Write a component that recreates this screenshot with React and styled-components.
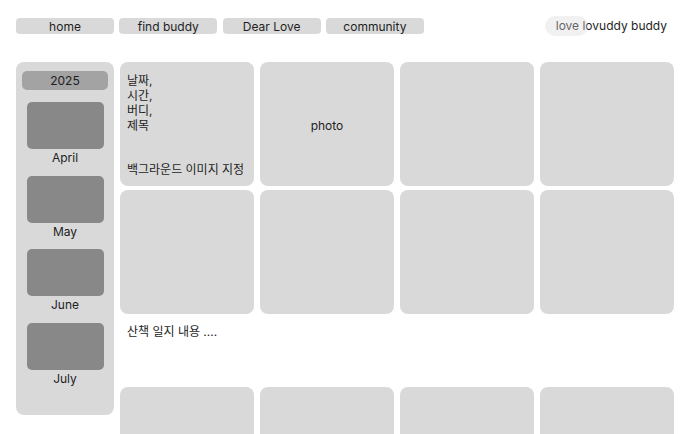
import React from "react";
import styled, { createGlobalStyle } from "styled-components";

const GlobalStyle = createGlobalStyle`
  html, body {
    margin: 0;
    padding: 0;
    background: #ffffff;
    overflow: hidden;
  }
  body {
    font-family: Inter, "Noto Sans CJK KR", sans-serif;
    color: #1e1e1e;
  }
`;

const Page = styled.div`
  width: 685px;
  height: 434px;
  overflow: hidden;
`;

const Header = styled.div`
  display: flex;
  flex-direction: row;
  justify-content: space-between;
  align-items: center;
  padding: 18px 18px 0 16px;
  height: 16px;
`;

const NavList = styled.div`
  display: flex;
  flex-direction: row;
  gap: 5.3px;
`;

const NavItem = styled.a`
  display: flex;
  align-items: center;
  justify-content: center;
  width: 98px;
  height: 16px;
  border-radius: 4px;
  background: #d9d9d9;
  text-decoration: none;
  color: #1e1e1e;
  font-size: 12px;
  line-height: 16px;
  padding-top: 1px;
  box-sizing: border-box;
`;

const Brand = styled.div`
  position: relative;
  font-size: 12px;
  line-height: 16px;
  color: #1e1e1e;
`;

const BrandPill = styled.span`
  position: absolute;
  left: -11px;
  top: -2px;
  width: 43px;
  height: 20px;
  border-radius: 10px;
  background: rgba(217, 217, 217, 0.36);
`;

const Main = styled.div`
  display: flex;
  flex-direction: row;
  align-items: flex-start;
  gap: 6px;
  padding: 28px 0 0 16px;
`;

const Sidebar = styled.div`
  display: flex;
  flex-direction: column;
  align-items: center;
  width: 98px;
  height: 353px;
  box-sizing: border-box;
  padding: 9px 6px 0;
  border-radius: 8px;
  background: #d9d9d9;
`;

const Year = styled.div`
  align-self: stretch;
  height: 19px;
  border-radius: 5px;
  background: #a3a3a3;
  font-size: 12px;
  line-height: 19px;
  text-align: center;
  margin-bottom: 12px;
`;

const MonthList = styled.div`
  display: flex;
  flex-direction: column;
  gap: 10.5px;
`;

const Month = styled.div`
  display: flex;
  flex-direction: column;
  align-items: center;
`;

const Thumb = styled.div`
  width: 77px;
  height: 47px;
  border-radius: 5px;
  background: #888888;
`;

const MonthLabel = styled.div`
  margin-top: 1px;
  font-size: 12px;
  line-height: 15px;
`;

const Grid = styled.div`
  display: grid;
  grid-template-columns: repeat(4, 134px);
  grid-template-rows: 124px 124px 65px 124px;
  column-gap: 6px;
  row-gap: 4px;
`;

const Card = styled.div`
  display: flex;
  flex-direction: column;
  justify-content: ${(p) => (p.$center ? "center" : "space-between")};
  align-items: ${(p) => (p.$center ? "center" : "flex-start")};
  box-sizing: border-box;
  padding: ${(p) => (p.$center ? "2px 0 0" : "11px 7px 9px")};
  border-radius: 8px;
  background: #d9d9d9;
  font-size: 12px;
  line-height: 15px;
`;

const Lines = styled.div`
  white-space: pre-line;
`;

const Note = styled.div`
  grid-column: 1 / -1;
  padding: 7px 7px 0;
  font-size: 12px;
  line-height: 14px;
`;

const months = ["April", "May", "June", "July"];

export default function App() {
  const link = "#";
  return (
    <Page>
      <GlobalStyle />
      <Header>
        <NavList>
          <NavItem href={link}>home</NavItem>
          <NavItem href={link}>find buddy</NavItem>
          <NavItem href={link}>Dear Love</NavItem>
          <NavItem href={link}>community</NavItem>
        </NavList>
        <Brand>
          love lovuddy buddy
          <BrandPill />
        </Brand>
      </Header>
      <Main>
        <Sidebar>
          <Year>2025</Year>
          <MonthList>
            {months.map((m) => (
              <Month key={m}>
                <Thumb />
                <MonthLabel>{m}</MonthLabel>
              </Month>
            ))}
          </MonthList>
        </Sidebar>
        <Grid>
          <Card>
            <Lines>{"날짜,\n시간,\n버디,\n제목"}</Lines>
            <div>백그라운드 이미지 지정</div>
          </Card>
          <Card $center>photo</Card>
          <Card />
          <Card />
          <Card />
          <Card />
          <Card />
          <Card />
          <Note>산책 일지 내용 ....</Note>
          <Card />
          <Card />
          <Card />
          <Card />
        </Grid>
      </Main>
    </Page>
  );
}
